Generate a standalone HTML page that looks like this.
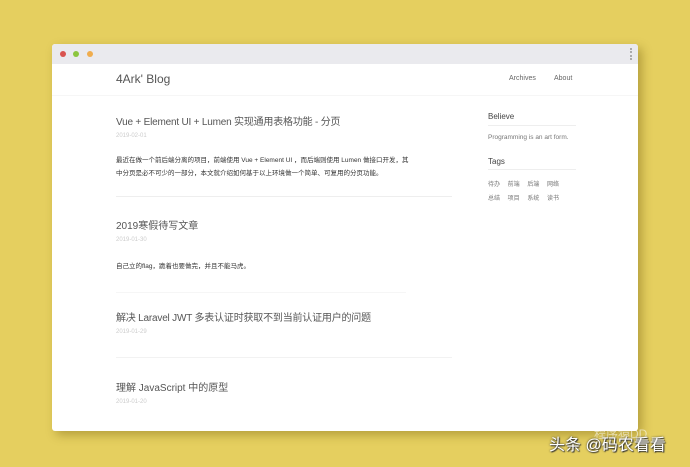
<!DOCTYPE html>
<html><head><meta charset="utf-8"><style>
*{margin:0;padding:0;box-sizing:border-box}
body{width:690px;height:467px;background:#e5cf5f;position:relative;overflow:hidden;font-family:"Liberation Sans","Noto Sans CJK SC",sans-serif;}
.win{position:absolute;left:52px;top:44px;width:586px;height:387px;background:#fff;box-shadow:4px 4px 10px rgba(120,100,20,.45);border-radius:3px;overflow:hidden}
.bar{height:20px;background:#eaeaee;position:relative}
.dot{position:absolute;top:7px;width:6px;height:6px;border-radius:50%}
.t{position:absolute;white-space:nowrap;color:#333}
.ln{position:absolute;height:1px;background:#eee}
</style></head><body>
<div class="win">
<div class="bar">
<div class="dot" style="left:8px;background:#d9534f"></div>
<div class="dot" style="left:21px;background:#8cc63f"></div>
<div class="dot" style="left:35px;background:#f0ad4e"></div>
<div style="position:absolute;right:6px;top:4px;width:2px;height:12px;border-left:2px dotted #aaa"></div>
</div>
<div class="ln" style="left:0;right:0;top:51px;background:#f6f6f6"></div>
<div class="t" style="left:64px;top:28px;font-size:12px;color:#555">4Ark' Blog</div>
<div class="t" style="left:457px;top:31px;font-size:7px;color:#666">Archives</div>
<div class="t" style="left:502px;top:31px;font-size:7px;color:#666">About</div>

<div class="t" style="left:64px;top:69px;font-size:10px;color:#555;letter-spacing:-0.2px">Vue + Element UI + Lumen 实现通用表格功能 - 分页</div>
<div class="t" style="left:64px;top:89px;font-size:6px;color:#ccc">2019-02-01</div>
<div class="t" style="left:64px;top:110px;font-size:6.5px;color:#333;line-height:13px">最近在做一个前后端分离的项目，前端使用 Vue + Element UI ，而后端则使用 Lumen 做接口开发，其<br>中分页是必不可少的一部分，本文就介绍如何基于以上环境做一个简单、可复用的分页功能。</div>
<div class="ln" style="left:64px;width:336px;top:152px"></div>

<div class="t" style="left:64px;top:173px;font-size:10px;color:#555">2019寒假待写文章</div>
<div class="t" style="left:64px;top:193px;font-size:6px;color:#ccc">2019-01-30</div>
<div class="t" style="left:64px;top:216px;font-size:6.5px;color:#333">自己立的flag，跪着也要做完，并且不能马虎。</div>
<div class="ln" style="left:64px;width:290px;top:248px;background:#f6f6f6"></div>

<div class="t" style="left:64px;top:265px;font-size:10px;color:#555;letter-spacing:-0.2px">解决 Laravel JWT 多表认证时获取不到当前认证用户的问题</div>
<div class="t" style="left:64px;top:285px;font-size:6px;color:#ccc">2019-01-29</div>
<div class="ln" style="left:64px;width:336px;top:313px;background:#f2f2f2"></div>

<div class="t" style="left:64px;top:335px;font-size:10px;color:#555">理解 JavaScript 中的原型</div>
<div class="t" style="left:64px;top:355px;font-size:6px;color:#ccc">2019-01-20</div>

<div class="t" style="left:436px;top:68px;font-size:8px;color:#444">Believe</div>
<div class="ln" style="left:436px;width:88px;top:81px"></div>
<div class="t" style="left:436px;top:90px;font-size:6.5px;color:#777">Programming is an art form.</div>
<div class="t" style="left:436px;top:113px;font-size:8px;color:#444">Tags</div>
<div class="ln" style="left:436px;width:88px;top:125px"></div>
<div class="t" style="left:436px;top:135px;font-size:6px;color:#777;word-spacing:6px">待办 前端 后端 网络</div>
<div class="t" style="left:436px;top:149px;font-size:6px;color:#777;word-spacing:6px">总结 项目 系统 读书</div>
</div>
<div class="t" style="left:594px;top:425px;font-size:12px;color:rgba(255,255,255,.55)">程序猿DD</div>
<div class="t" style="left:549px;top:431px;font-size:16px;color:#fff;text-shadow:1px 1px 1px #333,0 0 2px #333">头条 @码农看看</div>
</body></html>
